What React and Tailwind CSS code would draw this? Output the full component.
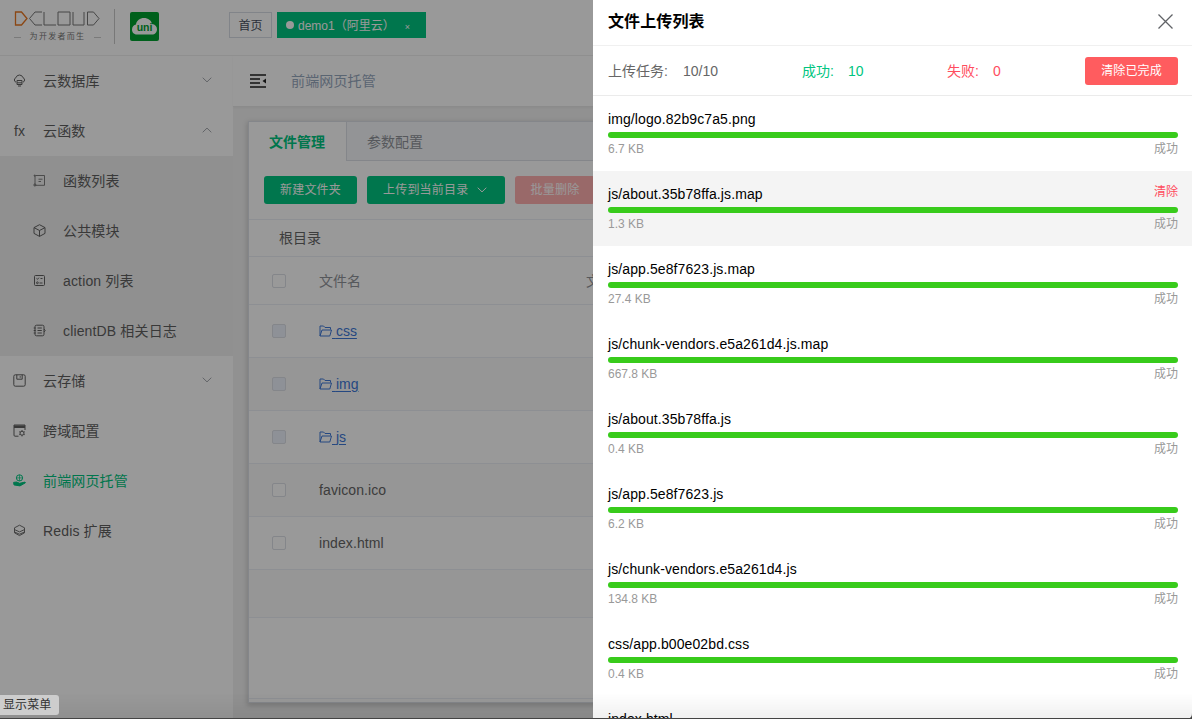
import React from 'react';
import clsx from 'clsx';

const uploads = [
    { name: 'img/logo.82b9c7a5.png', size: '6.7 KB' },
    { name: 'js/about.35b78ffa.js.map', size: '1.3 KB', active: true },
    { name: 'js/app.5e8f7623.js.map', size: '27.4 KB' },
    { name: 'js/chunk-vendors.e5a261d4.js.map', size: '667.8 KB' },
    { name: 'js/about.35b78ffa.js', size: '0.4 KB' },
    { name: 'js/app.5e8f7623.js', size: '6.2 KB' },
    { name: 'js/chunk-vendors.e5a261d4.js', size: '134.8 KB' },
    { name: 'css/app.b00e02bd.css', size: '0.4 KB' },
    { name: 'index.html' },
];

const files = [
    { name: 'css', folder: true },
    { name: 'img', folder: true },
    { name: 'js', folder: true },
    { name: 'favicon.ico' },
    { name: 'index.html' },
];

const icons = {
    database: (
        <>
            <path d="M3 8.200A2.400 2.400 0 0 1 2.900 3.700 3.700 3.700 0 0 1 10 3.700a2.400 2.400 0 0 1 0 4.500" />
            <path d="M4 6.500h5v2.300H4zM4 8.800v1.700h5V8.800M5 12h3" />
        </>
    ),
    list: (
        <>
            <path d="M3 1.500h8.500v9.800H3M2 2v8M5.500 5.200h4M5.500 7.500h2.500" strokeWidth=".8" />
            <circle cx="1.8" cy="1.6" r=".6" />
            <circle cx="1.9" cy="11" r="1" />
        </>
    ),
    cube: <path d="M6.500.7 12 3.600v5.800l-5.500 3L1 9.400V3.600zM1 3.600l5.500 2.900L12 3.600M6.500 6.500v5.900" />,
    action: (
        <>
            <rect x="1.5" y="1.5" width="10" height="10" rx="1" />
            <path d="m3.500 4.400 1 .9 1.400-1.600M7.500 4.500h2M6.500 9h3" />
            <circle cx="4.4" cy="8.8" r=".9" />
        </>
    ),
    log: (
        <>
            <rect x="2" y="1.2" width="9" height="10.6" rx="1.5" />
            <path d="M4.500 4h4.300M4.500 6.500h4.300M4.500 9h4.300M.7 4h2M.7 6.500h2M.7 9h2M11 5l1.200 1.500L11 8" />
        </>
    ),
    save: (
        <>
            <rect x=".8" y=".8" width="11.4" height="11.4" rx="1.5" />
            <path d="M3.800.8v4.400h5.400V.8M7.200 2.200v1.500" />
        </>
    ),
    config: (
        <>
            <path d="M5.500 12.200H2a1 1 0 0 1-1-1V1h11v5" />
            <path d="M1 2.700h11" strokeWidth="2.6" />
            <circle cx="9" cy="9.2" r="2" />
            <path d="M9 6.200v1M9 11.200v1.200M6.300 7.700l.9.5M10.800 10.200l.9.5M11.700 7.700l-.9.5M7.200 10.200l-.9.5" />
        </>
    ),
    hosting: (
        <>
            <circle cx="6.5" cy="3.9" r="3.1" />
            <path d="M3.500 3.900h6M6.500.8v6.200" strokeWidth=".7" />
            <path d="m.6 8.400 3-.4 3 1.300 5.400-1.200.4.700L7 11.900l-6-1z" fill="currentColor" />
        </>
    ),
    redis: (
        <>
            <path d="M6.500 1.200 11.500 3.800v5L6.500 11.600 1.500 8.800v-5z" strokeWidth=".9" />
            <path d="m1.500 5.600 5 2.300 5-2.300M1.500 8l5 2.200 5-2.200" strokeWidth=".9" />
        </>
    ),
};

const MenuIcon = ({ name }) => {
    if (name === 'fx') return <span className="w-[13px] text-center text-[14px] leading-none">fx</span>;
    return (
        <svg className="mb-px" width="13" height="13" viewBox="0 0 13 13" fill="none" stroke="currentColor" strokeWidth="1">
            {icons[name]}
        </svg>
    );
};

const Chevron = ({ up, className }) => (
    <svg className={clsx(className, up && 'rotate-180')} width="10" height="6" viewBox="0 0 10 6" fill="none" stroke="currentColor">
        <path d="m.7.7 4.300 4.200L9.300.7" />
    </svg>
);

const MenuItem = ({ icon, label, sub, arrow, active }) => (
    <li
        className={clsx(
            'flex h-[50px] items-center text-[14px] tracking-[0.15px]',
            sub ? 'gap-[17px] bg-[#f1f1f1] pl-[33px]' : 'gap-[17px] pl-[13px]',
            active ? 'text-[#00c580]' : 'text-[#606060]'
        )}
    >
        <MenuIcon name={icon} />
        <span className="grow">{label}</span>
        {arrow && <Chevron up={arrow === 'up'} className="mr-[21px] mb-[3px] text-[#a4a7ad]" />}
    </li>
);

const Logo = () => (
    <div className="flex h-[52px] items-center">
        <div className="mt-px ml-[14px] flex w-[87px] flex-col items-center">
            <svg width="87" height="15" viewBox="0 0 87 15" fill="none" stroke="#777">
                <path d="M1.500 1h6l5.500 6.500L7.500 14h-6z" stroke="#e87722" strokeWidth="1.3" />
                <path d="M28 1h-7l-5.500 6.500L21 14h7M30 1v13h12M44 1h12v13H44zM59 1v13h11V1M73.500 1h6l5.500 6.500-5.500 6.500h-6z" />
            </svg>
            <div className="mt-[6px] flex w-full items-center justify-between text-[#777]">
                <span className="h-px w-[7px] bg-[#ccc]" />
                <span className="text-[8px] leading-[10px] tracking-[1.300px]">为开发者而生</span>
                <span className="h-px w-[7px] bg-[#ccc]" />
            </div>
        </div>
        <div className="ml-[13px] h-[35px] w-px bg-[#c8c8c8]" />
        <svg className="ml-[15px]" width="29" height="29" viewBox="0 0 29 29">
            <rect width="29" height="29" rx="2" fill="#00a030" />
            <path d="M7 22.500C3.500 22.500 2 20 2 17.500c0-3 2-4.500 4-5C6.500 8.500 10 6 14 6s7.500 2.500 8 6c3 .3 5 2.500 5 5.200 0 3-2 5.300-5 5.300z" fill="#fff" />
            <text x="14.5" y="18.5" textAnchor="middle" fontSize="10.5" fontWeight="700" fill="#00a030">
                uni
            </text>
        </svg>
    </div>
);

const Header = () => (
    <header className="flex h-[56px] shrink-0 border-b border-[#efefef]">
        <div className="w-[229px]">
            <Logo />
        </div>
        <div className="mt-[12px] flex h-[26px] gap-[5px] text-[12px] leading-[26px]">
            <span className="w-[43px] border border-[#d8dce5] text-center text-[#495060]">首页</span>
            <span className="flex w-[149px] items-center bg-[#00c580] pl-[9px] text-white">
                <span className="mr-[4px] size-2 rounded-full bg-white" />
                <span className="pt-px">demo1（阿里云）</span>
                <span className="ml-[10px] pt-[3px] text-[9px]">×</span>
            </span>
        </div>
    </header>
);

const Sidebar = () => (
    <ul className="w-[233px] shrink-0">
        <MenuItem icon="database" label="云数据库" arrow="down" />
        <MenuItem icon="fx" label="云函数" arrow="up" />
        <MenuItem sub icon="list" label="函数列表" />
        <MenuItem sub icon="cube" label="公共模块" />
        <MenuItem sub icon="action" label="action 列表" />
        <MenuItem sub icon="log" label="clientDB 相关日志" />
        <MenuItem icon="save" label="云存储" arrow="down" />
        <MenuItem icon="config" label="跨域配置" />
        <MenuItem icon="hosting" label="前端网页托管" active />
        <MenuItem icon="redis" label="Redis 扩展" />
    </ul>
);

const Checkbox = ({ disabled }) => (
    <span
        className={clsx(
            'mr-[33px] ml-[23px] size-[14px] rounded-[2px] border border-[#dcdfe6]',
            disabled ? 'bg-[#edf2fc]' : 'bg-white'
        )}
    />
);

const FileManager = () => (
    <section className="mt-[14px] ml-[15px] flex h-[582px] flex-col border border-[#dcdfe6] bg-white shadow-[0_2px_5px_1px_rgba(0,0,0,0.16)]">
        <div className="flex h-[39px] shrink-0 text-[14px] leading-[40px]">
            <span className="w-[98px] border-r border-[#dcdfe6] pl-5 font-bold text-[#00c580]">文件管理</span>
            <span className="grow border-b border-[#dcdfe6] bg-[#f5f7fa] pl-5 text-[#909399]">参数配置</span>
        </div>
        <div className="flex h-[59px] shrink-0 items-center border-b border-[#ebeef5] pl-[15px] text-[12px] tracking-[0.2px] text-white">
            <button className="h-7 w-[93px] rounded-[3px] bg-[#00c580]">新建文件夹</button>
            <button className="ml-[10px] flex h-7 w-[138px] items-center rounded-[3px] bg-[#00c580] pl-4">
                上传到当前目录 <Chevron className="ml-[9px]" />
            </button>
            <button className="ml-[10px] h-7 w-[80px] rounded-[3px] bg-[#ffafb0]">批量删除</button>
        </div>
        <div className="flex h-[37px] shrink-0 items-center border-b border-[#ebeef5] pl-[30px] text-[14px] text-[#666]">根目录</div>
        <div className="flex h-[48px] shrink-0 items-center border-b border-[#ebeef5] text-[14px] text-[#909399]">
            <Checkbox />
            <span className="w-[267px] pt-px">文件名</span>
            <span className="pt-px">文件大小</span>
        </div>
        {files.map((file, i) => (
            <div
                key={file.name}
                className={clsx(
                    'flex h-[53px] shrink-0 items-center border-b border-[#ebeef5] text-[14px] text-[#666]',
                    i % 2 === 1 && 'bg-[#fafafa]'
                )}
            >
                <Checkbox disabled={file.folder} />
                {file.folder ? (
                    <a className="flex items-center text-[#3e78d8]">
                        <svg width="13" height="12" viewBox="0 0 13 12" fill="none" stroke="currentColor">
                            <path d="M1 11V1h3.500L6 2.500h5.500V4.500M1 11h9.800l1.700-6H3L1 11" />
                        </svg>
                        <span className="whitespace-pre underline underline-offset-2"> {file.name}</span>
                    </a>
                ) : (
                    <span className="tracking-[0.1px]">{file.name}</span>
                )}
            </div>
        ))}
        <div className="h-[48px] shrink-0 border-b border-[#ebeef5] bg-[#fafafa]" />
        <div className="h-[81px] shrink-0 border-b border-[#ebeef5]" />
    </section>
);

const UploadItem = ({ name, size, active }) => (
    <div className={clsx('shrink-0 px-[15px] pt-[13px]', size && 'h-[75px]', active && 'bg-[#f4f4f4]')}>
        <div className="flex h-[23px] w-[570px] justify-between">
            <span className="text-[14px] leading-[20px] tracking-[0.1px] text-black">{name}</span>
            {active && <span className="text-[12px] leading-[17px] text-[#ff4d5e]">清除</span>}
        </div>
        {size && (
            <>
                <div className="h-[6px] w-[570px] rounded-full bg-[#38cb1b]" />
                <div className="flex w-[570px] justify-between text-[12px] leading-[23px] text-[#999]">
                    <span>{size}</span>
                    <span>成功</span>
                </div>
            </>
        )}
    </div>
);

const UploadDrawer = () => (
    <aside className="fixed inset-y-0 right-0 flex w-[599px] flex-col overflow-hidden bg-white">
        <div className="flex h-[46px] shrink-0 items-center justify-between border-b border-[#f0f0f0] pr-[19px] pb-[2px] pl-[15px]">
            <h2 className="text-[16px] font-bold tracking-[0.1px] text-black">文件上传列表</h2>
            <svg width="15" height="15" viewBox="0 0 15 15" stroke="#606266" strokeWidth="1.3">
                <path d="m.5.5 14 14M14.500.5l-14 14" />
            </svg>
        </div>
        <div className="flex h-[50px] shrink-0 items-center border-b border-[#ebebeb] pr-[14px] pl-[15px] text-[14px]">
            <span className="w-[75px] pt-px text-[#666]">上传任务:</span>
            <span className="w-[119px] pt-px text-[#666]">10/10</span>
            <span className="w-[46px] pt-px text-[#00c580]">成功:</span>
            <span className="w-[99px] pt-px text-[#00c580]">10</span>
            <span className="w-[46px] pt-px text-[#ff4d5e]">失败:</span>
            <span className="pt-px text-[#ff4d5e]">0</span>
            <button className="ml-auto h-7 w-[93px] rounded-[3px] bg-[#ff5c5f] text-[12px] tracking-[0.1px] text-white">清除已完成</button>
        </div>
        {uploads.map((item) => (
            <UploadItem key={item.name} {...item} />
        ))}
    </aside>
);

const App = () => (
    <div className="flex h-screen flex-col overflow-hidden bg-white font-['Liberation_Sans','Noto_Sans_CJK_SC',sans-serif]">
        <Header />
        <div className="flex grow">
            <Sidebar />
            <main className="grow bg-[#f2f2f2]">
                <div className="flex h-[51px] items-center border-b border-[#e8e8e8] bg-white pl-[17px] shadow-[0_1px_2px_rgba(0,0,0,0.04)]">
                    <svg width="16" height="14" viewBox="0 0 16 14" fill="none" stroke="#222" strokeWidth="1.5">
                        <path d="M0 1h16M0 5h10M0 9h10M0 13h16" />
                        <path d="m16 4.500v5L12.500 7z" fill="#222" stroke="none" />
                    </svg>
                    <span className="ml-[25px] text-[14px] tracking-[0.15px] text-[#97a8be]">前端网页托管</span>
                </div>
                <FileManager />
            </main>
        </div>

        <div className="fixed inset-0 bg-black/40" />
        <UploadDrawer />

        <div className="fixed inset-x-0 bottom-0 h-[26px] border-b border-[#444] bg-linear-to-b from-transparent to-black/6" />
        <svg className="fixed right-0 bottom-0" width="6" height="6" viewBox="0 0 6 6">
            <path d="M6 0v6H0C4 6 6 4 6 0z" fill="#444" />
        </svg>
        <div className="fixed bottom-[4px] left-0 h-5 w-[59px] rounded-r-[3px] bg-[#cdcdcd] pl-[3px] text-[12px] leading-[20px] tracking-[0.1px] text-[#333]">
            显示菜单
        </div>
    </div>
);

export default App;
